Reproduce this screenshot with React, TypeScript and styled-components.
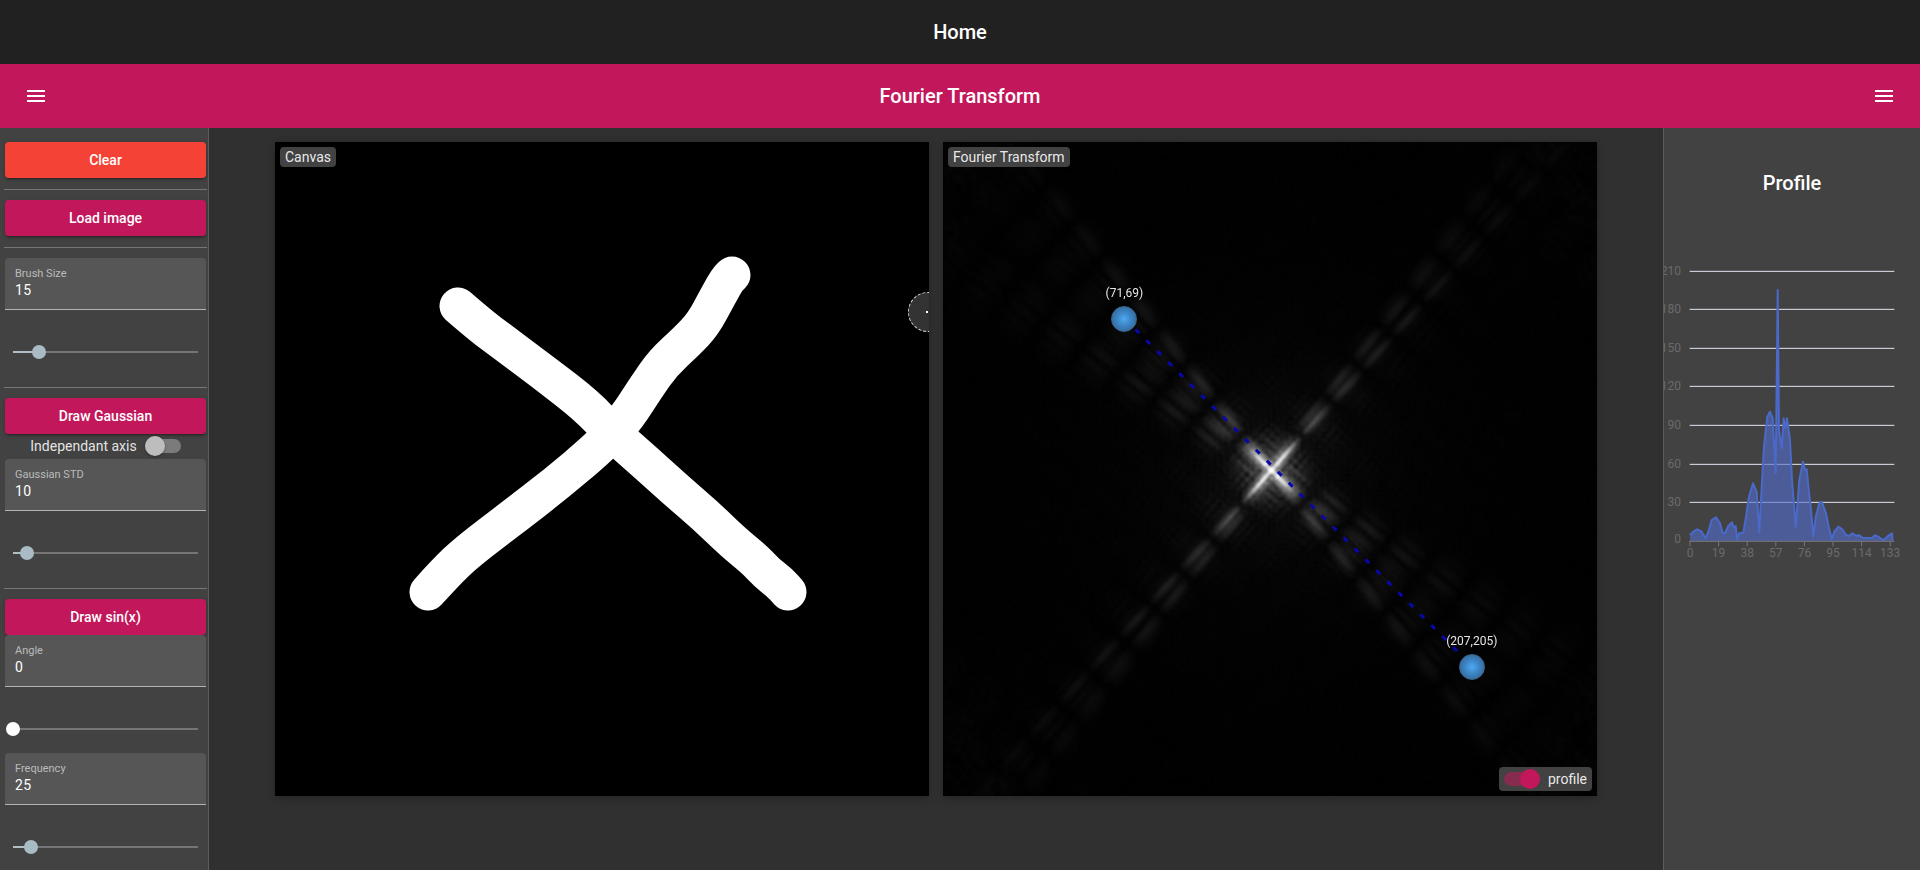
import React, { useEffect, useRef } from 'react'
import styled, { createGlobalStyle } from 'styled-components'

const Colors = {
  Pink: '#c2185b',
  Red: '#f44336',
  Panel: '#424242',
  Main: '#303030',
  Top: '#212121',
}

const SIZE = 256
const DISPLAY = 654

// the strokes drawn on the canvas, in display pixels
const STROKES: [number, number][][] = [
  [
    [183, 164], [205, 183], [225, 198], [268, 230], [312, 264], [337, 291], [370, 320], [402, 349], [430, 373],
    [458, 400], [480, 418], [492, 431], [505, 441], [513, 450],
  ],
  [
    [153, 450], [170, 431], [192, 410], [238, 375], [282, 341], [322, 307], [337, 291], [352, 275], [370, 247],
    [388, 221], [412, 199], [428, 182], [442, 156], [452, 138], [457, 133],
  ],
]

// midpoint quadratics, so the freehand strokes come out soft
const smooth = (pts: [number, number][]) => {
  let d = `M${pts[0][0]} ${pts[0][1]}`
  for (let i = 1; i < pts.length - 1; i++) {
    const mx = (pts[i][0] + pts[i + 1][0]) / 2
    const my = (pts[i][1] + pts[i + 1][1]) / 2
    d += ` Q${pts[i][0]} ${pts[i][1]} ${mx} ${my}`
  }
  const last = pts[pts.length - 1]
  return `${d} L${last[0]} ${last[1]}`
}

const DRAWING = STROKES.map(smooth).join(' ')

const PROFILE_TOP: [number, number][] = [
  [150, 1245], [160, 1235], [172, 1228], [185, 1235], [197, 1255], [205, 1235], [215, 1200], [228, 1192],
  [240, 1210], [248, 1238], [255, 1240], [265, 1218], [276, 1207], [281, 1222], [287, 1218], [291, 1258],
  [297, 1240], [310, 1238], [318, 1190], [327, 1130], [339, 1090], [350, 1115], [358, 1238], [365, 1100],
  [372, 980], [382, 890], [390, 875], [398, 895], [407, 1060], [413, 510], [417, 930], [425, 985],
  [431, 895], [436, 925], [441, 895], [450, 960], [456, 1080], [467, 1220], [478, 1080], [489, 1025],
  [495, 1050], [500, 1048], [506, 1110], [513, 1170], [520, 1250], [527, 1190], [538, 1150], [545, 1145],
  [558, 1180], [565, 1215], [575, 1258], [583, 1235], [595, 1220], [607, 1228], [618, 1245], [628, 1248],
  [637, 1240], [650, 1248], [657, 1245], [668, 1253], [695, 1254], [705, 1246], [715, 1250], [730, 1261],
  [745, 1247], [756, 1240], [758, 1262],
]
const Y_TICKS: [string, number][] = [
  ['210', 454], ['180', 568], ['150', 685], ['120', 799], ['90', 916], ['60', 1033], ['30', 1147],
]
const X_TICKS = ['0', '19', '38', '57', '76', '95', '114', '133']

const px = (x: number) => x / 3 - 24
const py = (y: number) => y / 3 - 130

function fft(re: Float64Array, im: Float64Array) {
  const n = re.length
  for (let i = 1, j = 0; i < n; i++) {
    let bit = n >> 1
    for (; j & bit; bit >>= 1) j ^= bit
    j ^= bit
    if (i < j) {
      const a = re[i]
      re[i] = re[j]
      re[j] = a
      const b = im[i]
      im[i] = im[j]
      im[j] = b
    }
  }
  for (let len = 2; len <= n; len <<= 1) {
    const ang = (-2 * Math.PI) / len
    for (let i = 0; i < n; i += len) {
      for (let k = 0; k < len / 2; k++) {
        const wr = Math.cos(ang * k)
        const wi = Math.sin(ang * k)
        const u = i + k
        const v = u + len / 2
        const tr = re[v] * wr - im[v] * wi
        const ti = re[v] * wi + im[v] * wr
        re[v] = re[u] - tr
        im[v] = im[u] - ti
        re[u] += tr
        im[u] += ti
      }
    }
  }
}

function Spectrum() {
  const ref = useRef<HTMLCanvasElement>(null)

  useEffect(() => {
    const off = document.createElement('canvas')
    off.width = off.height = SIZE
    const octx = off.getContext('2d')!
    octx.fillStyle = '#000'
    octx.fillRect(0, 0, SIZE, SIZE)
    octx.scale(SIZE / DISPLAY, SIZE / DISPLAY)
    octx.strokeStyle = '#fff'
    octx.lineWidth = 37
    octx.lineCap = 'round'
    octx.lineJoin = 'round'
    octx.stroke(new Path2D(DRAWING))
    const src = octx.getImageData(0, 0, SIZE, SIZE).data

    const re = new Float64Array(SIZE * SIZE)
    const im = new Float64Array(SIZE * SIZE)
    for (let i = 0; i < SIZE * SIZE; i++) re[i] = src[i * 4] / 255

    const rowR = new Float64Array(SIZE)
    const rowI = new Float64Array(SIZE)
    for (let y = 0; y < SIZE; y++) {
      for (let x = 0; x < SIZE; x++) {
        rowR[x] = re[y * SIZE + x]
        rowI[x] = im[y * SIZE + x]
      }
      fft(rowR, rowI)
      for (let x = 0; x < SIZE; x++) {
        re[y * SIZE + x] = rowR[x]
        im[y * SIZE + x] = rowI[x]
      }
    }
    for (let x = 0; x < SIZE; x++) {
      for (let y = 0; y < SIZE; y++) {
        rowR[y] = re[y * SIZE + x]
        rowI[y] = im[y * SIZE + x]
      }
      fft(rowR, rowI)
      for (let y = 0; y < SIZE; y++) {
        re[y * SIZE + x] = rowR[y]
        im[y * SIZE + x] = rowI[y]
      }
    }

    const ctx = ref.current!.getContext('2d')!
    const out = ctx.createImageData(SIZE, SIZE)
    const half = SIZE / 2
    const peak = Math.hypot(re[0], im[0])
    for (let y = 0; y < SIZE; y++) {
      for (let x = 0; x < SIZE; x++) {
        const u = (y + half) % SIZE
        const v = (x + half) % SIZE
        const m = Math.hypot(re[u * SIZE + v], im[u * SIZE + v]) / peak
        const g = Math.min(255, 255 * Math.pow(m * 3.2, 0.8))
        const o = (y * SIZE + x) * 4
        out.data[o] = out.data[o + 1] = out.data[o + 2] = g
        out.data[o + 3] = 255
      }
    }
    ctx.putImageData(out, 0, 0)
  }, [])

  return <SpectrumCanvas ref={ref} width={SIZE} height={SIZE} />
}

function MenuIcon() {
  return (
    <svg width="24" height="24" viewBox="0 0 24 24" fill="#fff">
      <path d="M3 18h18v-2H3v2zm0-5h18v-2H3v2zm0-7v2h18V6H3z" />
    </svg>
  )
}

function Field({ label, value }: { label: string; value: string }) {
  return (
    <FieldBox>
      <FieldLabel>{label}</FieldLabel>
      <FieldValue>{value}</FieldValue>
    </FieldBox>
  )
}

function Slider({ percent, $min }: { percent: number; $min?: boolean }) {
  return (
    <SliderRow>
      <SliderTrack>
        <SliderFill style={{ width: `${percent}%` }} />
        <SliderThumb $min={$min} style={{ left: `${percent}%` }} />
      </SliderTrack>
    </SliderRow>
  )
}

function Marker({ x, y }: { x: number; y: number }) {
  const left = (x / SIZE) * DISPLAY
  const top = (y / SIZE) * DISPLAY
  return (
    <MarkerWrap style={{ left, top }}>
      <MarkerLabel>
        ({x},{y})
      </MarkerLabel>
      <MarkerDot />
    </MarkerWrap>
  )
}

function ProfileChart() {
  const top = PROFILE_TOP.map(([x, y]) => `${px(x).toFixed(1)},${py(y).toFixed(1)}`).join(' ')
  const baseY = py(1264)
  const firstX = px(150)
  const lastX = px(758)
  return (
    <Chart width="256" height="320" viewBox="0 0 256 320">
      {Y_TICKS.map(([label, y]) => (
        <g key={label}>
          <line x1={px(149)} x2={px(763)} y1={py(y)} y2={py(y)} stroke="#e4e7f2" strokeWidth="1" />
          <AxisText x="17" y={py(y) + 4} textAnchor="end">
            {label}
          </AxisText>
        </g>
      ))}
      <AxisText x="17" y={baseY + 2} textAnchor="end">
        0
      </AxisText>
      <polygon points={`${firstX},${baseY} ${top} ${lastX},${baseY}`} fill="rgba(80,108,205,0.62)" />
      <polyline points={top} fill="none" stroke="#4a69c9" strokeWidth="2" strokeLinejoin="round" />
      <line x1={px(147)} x2={px(763)} y1={baseY} y2={baseY} stroke="#777" />
      {X_TICKS.map((label, i) => {
        const x = 26 + i * 28.6
        return (
          <g key={label}>
            <line x1={x} x2={x} y1={baseY} y2={baseY + 5} stroke="#777" />
            <AxisText x={x} y={baseY + 16} textAnchor="middle">
              {label}
            </AxisText>
          </g>
        )
      })}
    </Chart>
  )
}

export default function App() {
  return (
    <>
      <GlobalStyle />
      <Page>
        <TopBar>Home</TopBar>
        <Toolbar>
          <IconButton>
            <MenuIcon />
          </IconButton>
          <ToolbarTitle>Fourier Transform</ToolbarTitle>
          <IconButton>
            <MenuIcon />
          </IconButton>
        </Toolbar>
        <Body>
          <Sidebar>
            <Button $color={Colors.Red}>Clear</Button>
            <Divider />
            <Button>Load image</Button>
            <Divider />
            <Field label="Brush Size" value="15" />
            <Slider percent={14} />
            <Divider />
            <Button>Draw Gaussian</Button>
            <SwitchRow>
              Independant axis
              <Toggle>
                <ToggleThumb />
              </Toggle>
            </SwitchRow>
            <Field label="Gaussian STD" value="10" />
            <Slider percent={7.6} />
            <Divider />
            <Button>Draw sin(x)</Button>
            <Field label="Angle" value="0" />
            <Slider percent={0} $min />
            <Field label="Frequency" value="25" />
            <Slider percent={9.8} />
          </Sidebar>
          <Main>
            <ImagePanel>
              <DrawingSvg viewBox={`0 0 ${DISPLAY} ${DISPLAY}`}>
                <path
                  d={DRAWING}
                  fill="none"
                  stroke="#fff"
                  strokeWidth="37"
                  strokeLinecap="round"
                  strokeLinejoin="round"
                />
              </DrawingSvg>
              <PanelTag>Canvas</PanelTag>
              <BrushCursor>
                <BrushDot />
              </BrushCursor>
            </ImagePanel>
            <ImagePanel>
              <Spectrum />
              <ProfileLine viewBox={`0 0 ${DISPLAY} ${DISPLAY}`}>
                <line
                  x1={(71 / SIZE) * DISPLAY}
                  y1={(69 / SIZE) * DISPLAY}
                  x2={(207 / SIZE) * DISPLAY}
                  y2={(205 / SIZE) * DISPLAY}
                  stroke="#0808a8"
                  strokeWidth="3"
                  strokeDasharray="5.5 10"
                />
              </ProfileLine>
              <Marker x={71} y={69} />
              <Marker x={207} y={205} />
              <PanelTag>Fourier Transform</PanelTag>
              <ProfileSwitch>
                <OnToggle>
                  <OnThumb />
                </OnToggle>
                profile
              </ProfileSwitch>
            </ImagePanel>
          </Main>
          <ProfilePanel>
            <ProfileTitle>Profile</ProfileTitle>
            <ProfileChart />
          </ProfilePanel>
        </Body>
      </Page>
    </>
  )
}

const GlobalStyle = createGlobalStyle`
  html, body {
    margin: 0;
    height: 100%;
    overflow: hidden;
    background: ${Colors.Main};
    font-family: Roboto, "Liberation Sans", sans-serif;
    color: #fff;
  }
`

const Page = styled.div`
  display: flex;
  flex-direction: column;
  height: 100vh;
  overflow: hidden;
`

const TopBar = styled.header`
  flex: 0 0 64px;
  display: flex;
  align-items: center;
  justify-content: center;
  background: ${Colors.Top};
  font-size: 20px;
  font-weight: 500;
`

const Toolbar = styled.div`
  flex: 0 0 64px;
  display: flex;
  align-items: center;
  justify-content: space-between;
  padding: 0 24px;
  background: ${Colors.Pink};
`

const ToolbarTitle = styled.h1`
  margin: 0;
  font-size: 20px;
  font-weight: 500;
`

const IconButton = styled.div`
  display: flex;
  width: 24px;
  height: 24px;
`

const Body = styled.div`
  flex: 1;
  display: flex;
  min-height: 0;
`

const Sidebar = styled.aside`
  flex: 0 0 209px;
  box-sizing: border-box;
  display: flex;
  flex-direction: column;
  padding: 14px 2px 0 5px;
  background: ${Colors.Panel};
  border-right: 1px solid #5c5c5c;
  overflow: hidden;
`

const Button = styled.button<{ $color?: string }>`
  flex: 0 0 36px;
  border: 0;
  border-radius: 4px;
  padding: 0;
  background: ${(p) => p.$color || Colors.Pink};
  color: #fff;
  font-family: inherit;
  font-size: 14px;
  font-weight: 500;
  box-shadow: 0 3px 1px -2px rgba(0, 0, 0, 0.2), 0 2px 2px rgba(0, 0, 0, 0.14), 0 1px 5px rgba(0, 0, 0, 0.12);
`

const Divider = styled.hr`
  flex: 0 0 1px;
  width: 203px;
  margin: 11px 0 10px -1px;
  border: 0;
  background: #767676;
`

const FieldBox = styled.div`
  flex: 0 0 52.25px;
  box-sizing: border-box;
  padding: 9px 10px 0;
  background: #565656;
  border-radius: 4px 4px 0 0;
  border-bottom: 1px solid #b3b3b3;
`

const FieldLabel = styled.div`
  font-size: 11px;
  line-height: 14px;
  color: rgba(255, 255, 255, 0.6);
`

const FieldValue = styled.div`
  font-size: 14px;
  line-height: 18px;
  letter-spacing: 0.4px;
`

const SliderRow = styled.div`
  flex: 0 0 48px;
  margin-top: 18px;
  display: flex;
  align-items: center;
  padding: 0 8px;
`

const SliderTrack = styled.div`
  position: relative;
  flex: 1;
  height: 2px;
  background: #757575;
`

const SliderFill = styled.div`
  height: 100%;
  background: #b0bec5;
`

const SliderThumb = styled.div<{ $min?: boolean }>`
  position: absolute;
  top: -6px;
  width: 14px;
  height: 14px;
  margin-left: -7px;
  border-radius: 50%;
  background: ${(p) => (p.$min ? '#fff' : '#a9bbc5')};
`

const SwitchRow = styled.div`
  flex: 0 0 24.25px;
  display: flex;
  align-items: center;
  justify-content: center;
  gap: 8px;
  font-size: 14px;
  color: rgba(255, 255, 255, 0.87);
`

const Toggle = styled.div`
  position: relative;
  width: 36px;
  height: 14px;
  border-radius: 7px;
  background: rgba(255, 255, 255, 0.3);
`

const ToggleThumb = styled.div`
  position: absolute;
  top: -3px;
  left: 0;
  width: 20px;
  height: 20px;
  border-radius: 50%;
  background: #bdbdbd;
  box-shadow: 0 1px 3px rgba(0, 0, 0, 0.3);
`

const Main = styled.main`
  flex: 1;
  display: flex;
  justify-content: center;
  align-items: flex-start;
  gap: 14px;
  padding-top: 14px;
`

const ImagePanel = styled.div`
  position: relative;
  flex: 0 0 ${DISPLAY}px;
  height: ${DISPLAY}px;
  background: #000;
  overflow: hidden;
  box-shadow: 0 2px 8px rgba(0, 0, 0, 0.25);
`

const DrawingSvg = styled.svg`
  display: block;
  width: 100%;
  height: 100%;
  filter: blur(0.7px);
`

const SpectrumCanvas = styled.canvas`
  display: block;
  width: 100%;
  height: 100%;
  filter: blur(0.8px);
`

const ProfileLine = styled.svg`
  position: absolute;
  inset: 0;
  width: 100%;
  height: 100%;
`

const PanelTag = styled.div`
  position: absolute;
  top: 5px;
  left: 5px;
  padding: 0 5px;
  height: 20px;
  line-height: 20px;
  border-radius: 4px;
  background: #424242;
  font-size: 14px;
  color: rgba(255, 255, 255, 0.9);
`

const BrushCursor = styled.div`
  position: absolute;
  top: 150px;
  right: -19px;
  box-sizing: border-box;
  width: 40px;
  height: 40px;
  border-radius: 50%;
  border: 1px dashed #ddd;
  background: #333;
`

const BrushDot = styled.div`
  position: absolute;
  top: 18px;
  left: 17px;
  width: 2px;
  height: 2px;
  background: #fff;
`

const MarkerWrap = styled.div`
  position: absolute;
  width: 0;
  height: 0;
`

const MarkerDot = styled.div`
  position: absolute;
  top: -12px;
  left: -13px;
  box-sizing: border-box;
  width: 26px;
  height: 26px;
  border-radius: 50%;
  border: 1px solid #3f6587;
  background: radial-gradient(circle, #4faaf2 0%, #3f8acb 35%, #2b5a88 100%);
`

const MarkerLabel = styled.div`
  position: absolute;
  top: -33px;
  left: -40px;
  width: 80px;
  text-align: center;
  font-size: 12px;
  line-height: 16px;
  color: rgba(255, 255, 255, 0.9);
`

const ProfileSwitch = styled.div`
  position: absolute;
  right: 5px;
  bottom: 5px;
  display: flex;
  align-items: center;
  gap: 8px;
  height: 24px;
  padding: 0 5px;
  border-radius: 4px;
  background: #424242;
  font-size: 14px;
  color: rgba(255, 255, 255, 0.9);
`

const OnToggle = styled.div`
  position: relative;
  width: 36px;
  height: 14px;
  border-radius: 7px;
  background: rgba(194, 24, 91, 0.54);
`

const OnThumb = styled.div`
  position: absolute;
  top: -3px;
  right: 0;
  width: 20px;
  height: 20px;
  border-radius: 50%;
  background: ${Colors.Pink};
`

const ProfilePanel = styled.aside`
  flex: 0 0 257px;
  box-sizing: border-box;
  display: flex;
  flex-direction: column;
  align-items: center;
  background: ${Colors.Panel};
  border-left: 1px solid #5c5c5c;
  overflow: hidden;
`

const ProfileTitle = styled.h2`
  margin: 43px 0 0;
  font-size: 20px;
  line-height: 24px;
  font-weight: 500;
`

const Chart = styled.svg`
  display: block;
  margin-top: 55px;
`

const AxisText = styled.text`
  font-size: 12px;
  fill: #6b6b6b;
`
